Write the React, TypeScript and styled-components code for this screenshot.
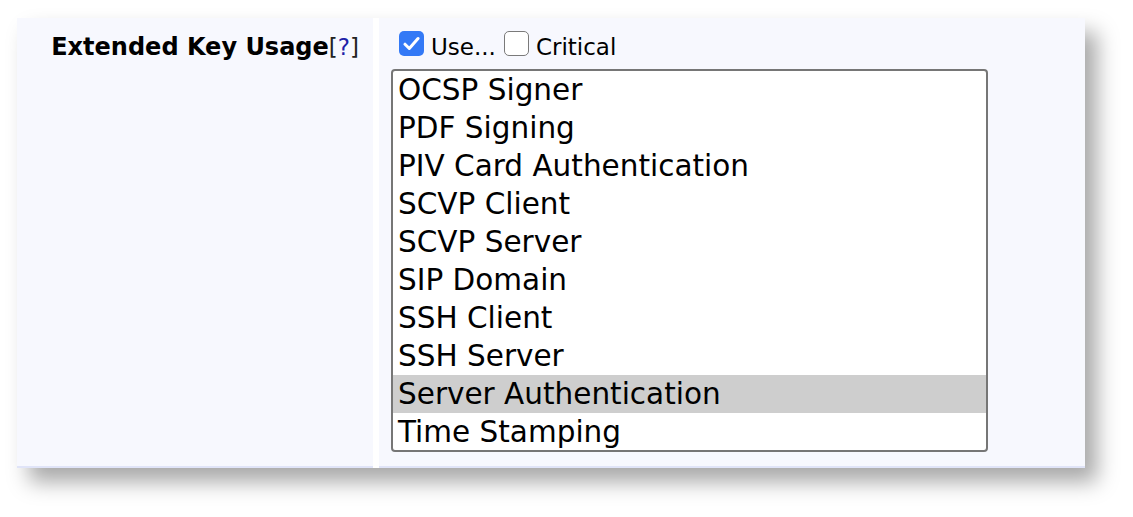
import styled, { createGlobalStyle } from "styled-components";

const GlobalStyle = createGlobalStyle`
  html, body {
    margin: 0;
    background: #ffffff;
    font-family: "DejaVu Sans", Verdana, sans-serif;
    color: #000;
  }
`;

const usages = [
  "OCSP Signer",
  "PDF Signing",
  "PIV Card Authentication",
  "SCVP Client",
  "SCVP Server",
  "SIP Domain",
  "SSH Client",
  "SSH Server",
  "Server Authentication",
  "Time Stamping",
];

const selected = "Server Authentication";

const Page = styled.div`
  padding: 18px 0 49px 17px;
`;

const Panel = styled.div`
  display: flex;
  gap: 6px;
  width: 1068px;
  background: #ffffff;
  box-shadow: 12px 14px 20px rgba(0, 0, 0, 0.34);
`;

const Cell = styled.div<{ $label?: boolean }>`
  background: #f7f8fe;
  border-bottom: 2px solid #e0e4f8;
  box-sizing: border-box;
  height: 450px;
  padding: 14px 12px 14px 12px;
  ${(p) =>
    p.$label
      ? `
    width: 356px;
    flex: none;
    text-align: right;
    padding-right: 14px;
  `
      : `
    flex: 1;
  `}
`;

const Label = styled.span`
  font-size: 24px;
  line-height: 30px;
  font-weight: bold;
`;

const Help = styled.span`
  font-size: 23px;
  line-height: 30px;
  font-weight: normal;
  color: #222;

  a {
    color: #1f22a8;
    text-decoration: none;
  }
`;

const CheckRow = styled.div`
  display: flex;
  align-items: flex-start;
  height: 30px;
  font-size: 23px;
  line-height: 30px;
`;

const Box = styled.span<{ $checked?: boolean }>`
  display: inline-flex;
  align-items: center;
  justify-content: center;
  width: 25px;
  height: 25px;
  margin-top: -1px;
  box-sizing: border-box;
  border-radius: 5px;
  margin-right: 7px;
  margin-left: ${(p) => (p.$checked ? "8px" : "8px")};
  background: ${(p) => (p.$checked ? "#3379f6" : "#ffffff")};
  border: ${(p) => (p.$checked ? "none" : "1.5px solid #7a7a7a")};
`;

const List = styled.div`
  margin-top: 7px;
  width: 597px;
  height: 383px;
  box-sizing: border-box;
  border: 2px solid #767676;
  border-radius: 4px;
  background: #ffffff;
  overflow: hidden;
`;

const Option = styled.div<{ $selected?: boolean }>`
  height: 38px;
  line-height: 38px;
  font-size: 29.5px;
  padding-left: 5px;
  white-space: nowrap;
  background: ${(p) => (p.$selected ? "#cecece" : "transparent")};
`;

const Check = () => (
  <svg width="17" height="15" viewBox="0 0 17 15">
    <path
      d="M2 8.2 L6.3 12.5 L15 2.5"
      fill="none"
      stroke="#fff"
      strokeWidth="3"
      strokeLinecap="round"
      strokeLinejoin="round"
    />
  </svg>
);

export default function App() {
  return (
    <Page>
      <GlobalStyle />
      <Panel>
        <Cell $label>
          <Label>Extended Key Usage</Label>
          <Help>
            [<a href="#">?</a>]
          </Help>
        </Cell>
        <Cell>
          <CheckRow>
            <Box $checked>
              <Check />
            </Box>
            Use...
            <Box />
            Critical
          </CheckRow>
          <List>
            {usages.map((u) => (
              <Option key={u} $selected={u === selected}>
                {u}
              </Option>
            ))}
          </List>
        </Cell>
      </Panel>
    </Page>
  );
}
